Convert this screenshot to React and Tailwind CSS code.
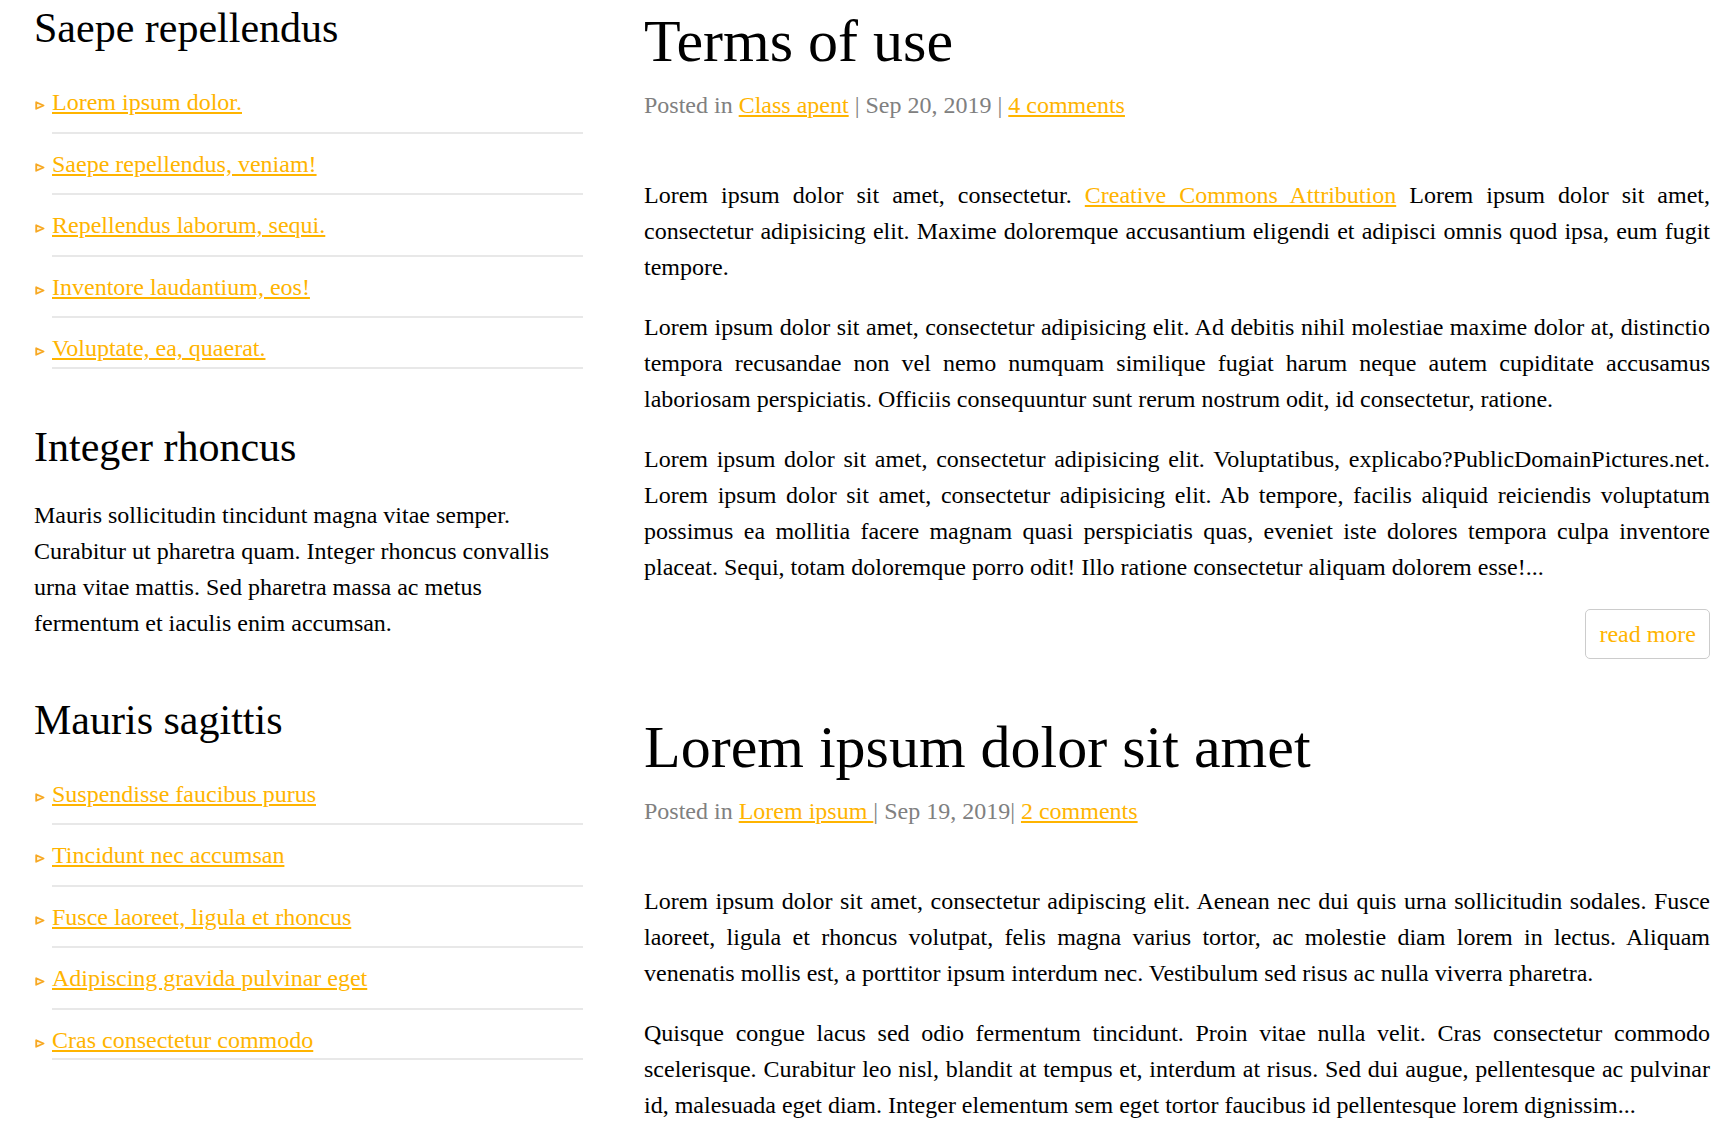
import React from "react";

const LINK = "text-[#ffb400] underline";

function Bullet() {
  return (
    <svg width="10" height="9" viewBox="0 0 10 9" className="ml-[1px]">
      <polygon points="1.2,1.2 8.6,4.5 1.2,7.8" fill="#fff4dc" stroke="#f7a823" strokeWidth="1.8" strokeLinejoin="round" />
    </svg>
  );
}

function LinkList({ items }) {
  return (
    <ul className="mt-[19px]">
      {items.map((t, i) => (
        <li key={t} className="flex">
          <span className="w-[18px] shrink-0 pt-[29px]">
            <Bullet />
          </span>
          <div
            className={
              "flex-1 border-b-2 border-[#e8e8e8] pt-[12px] leading-[36.5px] " +
              (i === items.length - 1 ? "pb-0" : "pb-[11px]")
            }
          >
            <a href="#" className={LINK}>{t}</a>
          </div>
        </li>
      ))}
    </ul>
  );
}

function Meta({ children }) {
  return <div className="mt-[13px] mb-[54px] text-[24px] leading-[36px] text-[#808080]">{children}</div>;
}

function ReadMore() {
  return (
    <div className="flex justify-end">
      <a href="#" className="rounded-[5px] border border-[#cccccc] px-[13px] py-[6px] text-[24px] leading-[36px] text-[#ffb400]">
        read more
      </a>
    </div>
  );
}

export default function App() {
  return (
    <div
      className="flex bg-white pl-[34px] pr-[21px] text-black"
      style={{ fontFamily: '"Liberation Serif", "Times New Roman", serif' }}
    >
      <aside className="w-[549px] shrink-0 pt-[3px] text-[24px]">
        <section className="mb-[53px]">
          <h2 className="text-[42px] leading-[50px] font-normal">Saepe repellendus</h2>
          <LinkList
            items={[
              "Lorem ipsum dolor.",
              "Saepe repellendus, veniam!",
              "Repellendus laborum, sequi.",
              "Inventore laudantium, eos!",
              "Voluptate, ea, quaerat.",
            ]}
          />
        </section>
        <section className="mb-[54px]">
          <h2 className="text-[42px] leading-[50px] font-normal">Integer rhoncus</h2>
          <p className="mt-[25px] leading-[36px]">
            Mauris sollicitudin tincidunt magna vitae semper. Curabitur ut pharetra quam. Integer rhoncus convallis urna vitae mattis. Sed pharetra massa ac metus fermentum et iaculis enim accumsan.
          </p>
        </section>
        <section>
          <h2 className="text-[42px] leading-[50px] font-normal">Mauris sagittis</h2>
          <LinkList
            items={[
              "Suspendisse faucibus purus",
              "Tincidunt nec accumsan",
              "Fusce laoreet, ligula et rhoncus",
              "Adipiscing gravida pulvinar eget",
              "Cras consectetur commodo",
            ]}
          />
        </section>
      </aside>

      <main className="ml-[61px] w-[1066px] shrink-0 pt-[8px] text-[24px] leading-[36px]">
        <article className="mb-[55px]">
          <h1 className="text-[60px] leading-[66px] font-normal">Terms of use</h1>
          <Meta>
            Posted in <a href="#" className={LINK}>Class apent</a> | Sep 20, 2019 |{" "}
            <a href="#" className={LINK}>4 comments</a>
          </Meta>
          <p className="mb-[24px] text-justify">
            Lorem ipsum dolor sit amet, consectetur.{" "}
            <a href="#" className={LINK}>Creative Commons Attribution</a> Lorem ipsum dolor sit amet, consectetur adipisicing elit. Maxime doloremque accusantium eligendi et adipisci omnis quod ipsa, eum fugit tempore.
          </p>
          <p className="mb-[24px] text-justify">
            Lorem ipsum dolor sit amet, consectetur adipisicing elit. Ad debitis nihil molestiae maxime dolor at, distinctio tempora recusandae non vel nemo numquam similique fugiat harum neque autem cupiditate accusamus laboriosam perspiciatis. Officiis consequuntur sunt rerum nostrum odit, id consectetur, ratione.
          </p>
          <p className="mb-[24px] text-justify">
            Lorem ipsum dolor sit amet, consectetur adipisicing elit. Voluptatibus, explicabo?PublicDomainPictures.net. Lorem ipsum dolor sit amet, consectetur adipisicing elit. Ab tempore, facilis aliquid reiciendis voluptatum possimus ea mollitia facere magnam quasi perspiciatis quas, eveniet iste dolores tempora culpa inventore placeat. Sequi, totam doloremque porro odit! Illo ratione consectetur aliquam dolorem esse!...
          </p>
          <ReadMore />
        </article>

        <article className="mb-[55px]">
          <h1 className="text-[60px] leading-[66px] font-normal">Lorem ipsum dolor sit amet</h1>
          <Meta>
            Posted in <a href="#" className={LINK}>Lorem ipsum </a>| Sep 19, 2019|{" "}
            <a href="#" className={LINK}>2 comments</a>
          </Meta>
          <p className="mb-[24px] text-justify">
            Lorem ipsum dolor sit amet, consectetur adipiscing elit. Aenean nec dui quis urna sollicitudin sodales. Fusce laoreet, ligula et rhoncus volutpat, felis magna varius tortor, ac molestie diam lorem in lectus. Aliquam venenatis mollis est, a porttitor ipsum interdum nec. Vestibulum sed risus ac nulla viverra pharetra.
          </p>
          <p className="mb-[24px] text-justify">
            Quisque congue lacus sed odio fermentum tincidunt. Proin vitae nulla velit. Cras consectetur commodo scelerisque. Curabitur leo nisl, blandit at tempus et, interdum at risus. Sed dui augue, pellentesque ac pulvinar id, malesuada eget diam. Integer elementum sem eget tortor faucibus id pellentesque lorem dignissim...
          </p>
          <ReadMore />
        </article>
      </main>
    </div>
  );
}
